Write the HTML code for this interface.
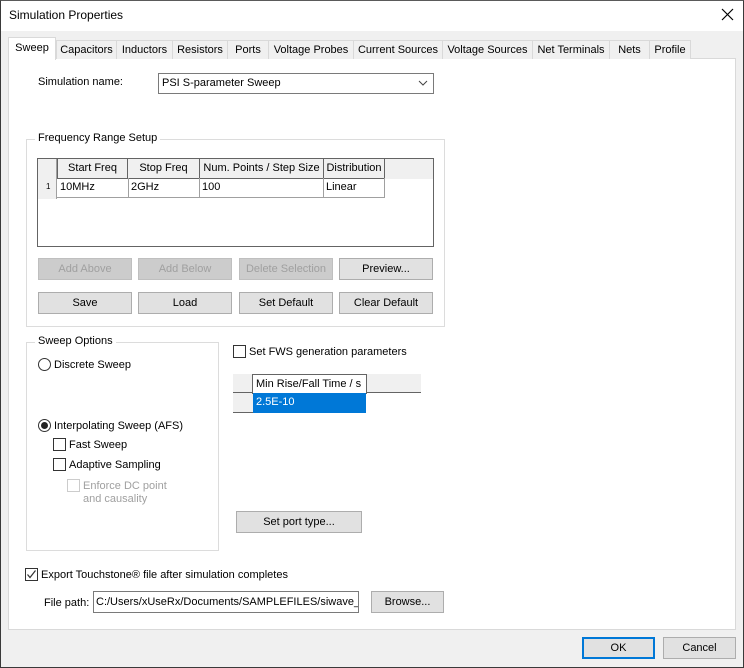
<!DOCTYPE html>
<html><head><style>
*{box-sizing:border-box;margin:0;padding:0}
body{width:744px;height:668px;overflow:hidden;font-family:"Liberation Sans",sans-serif;font-size:11px;color:#000;background:#f0f0f0;position:relative}
.a{position:absolute}
.win{left:0;top:0;width:744px;height:668px;border:1px solid #3a3a3a;border-top-color:#5a5a5a}
.title{left:1px;top:1px;width:742px;height:30px;background:#fff}
.tab{position:absolute;top:40px;height:19px;background:#f0f0f0;border:1px solid #d9d9d9;border-bottom:none;text-align:center;line-height:18px;white-space:nowrap}
.panel{left:8px;top:58px;width:728px;height:572px;background:#fff;border:1px solid #d9d9d9}
.btn{position:absolute;height:22px;background:#e1e1e1;border:1px solid #adadad;text-align:center;line-height:20px}
.dis{background:#cccccc;border-color:#bfbfbf;color:#a0a0a0}
.grp{position:absolute;border:1px solid #dcdcdc}
.gl{position:absolute;background:#fff;padding:0 3px;top:-8px;left:8px}
.cb{position:absolute;width:13px;height:13px;border:1px solid #333;background:#fff}
.cell{position:absolute;height:20px;line-height:19px;padding-left:3px;white-space:nowrap;overflow:hidden}
</style></head><body>
<div class="a win"></div>
<div class="a title"></div>
<div class="a" style="left:9px;top:8px;font-size:12px">Simulation Properties</div>
<svg class="a" style="left:721px;top:8px" width="13" height="13"><path d="M1 1L12 12M12 1L1 12" stroke="#000" stroke-width="1.2"/></svg>

<div class="a panel"></div>
<div class="tab" style="left:56px;width:61px">Capacitors</div>
<div class="tab" style="left:116px;width:57px">Inductors</div>
<div class="tab" style="left:172px;width:56px">Resistors</div>
<div class="tab" style="left:227px;width:42px">Ports</div>
<div class="tab" style="left:268px;width:86px">Voltage Probes</div>
<div class="tab" style="left:353px;width:90px">Current Sources</div>
<div class="tab" style="left:442px;width:91px">Voltage Sources</div>
<div class="tab" style="left:532px;width:78px">Net Terminals</div>
<div class="tab" style="left:609px;width:41px">Nets</div>
<div class="tab" style="left:649px;width:42px">Profile</div>
<div class="tab" style="left:8px;top:37px;width:48px;height:23px;background:#fff;line-height:21px">Sweep</div>

<div class="a" style="left:38px;top:76px">Simulation name:</div>
<div class="a" style="left:158px;top:73px;width:276px;height:21px;border:1px solid #7a7a7a;background:#fff;line-height:19px;padding-left:3px">PSI S-parameter Sweep</div>
<svg class="a" style="left:418px;top:80px" width="10" height="6"><path d="M1 1L5 5L9 1" stroke="#444" fill="none"/></svg>

<div class="grp" style="left:26px;top:139px;width:419px;height:188px"><div class="gl">Frequency Range Setup</div></div>
<div class="a" style="left:37px;top:158px;width:397px;height:89px;border:1px solid #646464;background:#fff"></div>
<div class="a" style="left:38px;top:159px;width:395px;height:20px;background:#f0f0f0"></div>
<div class="a" style="left:38px;top:159px;width:19px;height:40px;background:#f0f0f0;border-right:1px solid #a0a0a0"></div>
<div class="cell" style="left:57px;top:159px;width:71px;border:1px solid #646464;border-top:none;text-align:center;padding:0">Start Freq</div>
<div class="cell" style="left:128px;top:159px;width:72px;border:1px solid #646464;border-top:none;border-left:none;text-align:center;padding:0">Stop Freq</div>
<div class="cell" style="left:199px;top:159px;width:125px;border:1px solid #646464;border-top:none;text-align:center;padding:0">Num. Points / Step Size</div>
<div class="cell" style="left:323px;top:159px;width:62px;border:1px solid #646464;border-top:none;text-align:center;padding:0">Distribution</div>
<div class="cell" style="left:57px;top:178px;width:72px;border-right:1px solid #a0a0a0;border-bottom:1px solid #a0a0a0">10MHz</div>
<div class="cell" style="left:128px;top:178px;width:72px;border-right:1px solid #a0a0a0;border-bottom:1px solid #a0a0a0">2GHz</div>
<div class="cell" style="left:199px;top:178px;width:125px;border-right:1px solid #a0a0a0;border-bottom:1px solid #a0a0a0">100</div>
<div class="cell" style="left:323px;top:178px;width:62px;border-right:1px solid #a0a0a0;border-bottom:1px solid #a0a0a0">Linear</div>
<div class="a" style="left:46px;top:182px;font-size:8px">1</div>

<div class="btn dis" style="left:38px;top:258px;width:94px">Add Above</div>
<div class="btn dis" style="left:138px;top:258px;width:94px">Add Below</div>
<div class="btn dis" style="left:239px;top:258px;width:94px">Delete Selection</div>
<div class="btn" style="left:339px;top:258px;width:94px">Preview...</div>
<div class="btn" style="left:38px;top:292px;width:94px">Save</div>
<div class="btn" style="left:138px;top:292px;width:94px">Load</div>
<div class="btn" style="left:239px;top:292px;width:94px">Set Default</div>
<div class="btn" style="left:339px;top:292px;width:94px">Clear Default</div>

<div class="grp" style="left:26px;top:342px;width:193px;height:209px"><div class="gl">Sweep Options</div></div>
<div class="a" style="left:38px;top:358px;width:13px;height:13px;border:1px solid #333;border-radius:50%;background:#fff"></div>
<div class="a" style="left:54px;top:359px">Discrete Sweep</div>
<div class="a" style="left:38px;top:419px;width:13px;height:13px;border:1px solid #333;border-radius:50%;background:#fff"></div>
<div class="a" style="left:41px;top:422px;width:7px;height:7px;border-radius:50%;background:#222"></div>
<div class="a" style="left:54px;top:420px">Interpolating Sweep (AFS)</div>
<div class="cb" style="left:53px;top:438px"></div>
<div class="a" style="left:69px;top:439px">Fast Sweep</div>
<div class="cb" style="left:53px;top:458px"></div>
<div class="a" style="left:69px;top:459px">Adaptive Sampling</div>
<div class="cb" style="left:67px;top:479px;border-color:#ccc"></div>
<div class="a" style="left:83px;top:480px;color:#a0a0a0;line-height:13px">Enforce DC point<br>and causality</div>

<div class="cb" style="left:233px;top:345px"></div>
<div class="a" style="left:249px;top:346px">Set FWS generation parameters</div>
<div class="a" style="left:233px;top:374px;width:188px;height:19px;background:#f0f0f0;border-bottom:1px solid #646464"></div>
<div class="a" style="left:233px;top:393px;width:20px;height:20px;background:#f0f0f0;border-bottom:1px solid #646464"></div>
<div class="cell" style="left:252px;top:374px;width:115px;border:1px solid #646464;background:#fff">Min Rise/Fall Time / s</div>
<div class="cell" style="left:253px;top:393px;width:113px;background:#0078d7;color:#fff">2.5E-10</div>

<div class="btn" style="left:236px;top:511px;width:126px">Set port type...</div>

<div class="cb" style="left:25px;top:568px"></div>
<svg class="a" style="left:26px;top:569px" width="11" height="11"><path d="M1.5 5.5L4 8.5L9.5 1.5" stroke="#333" fill="none" stroke-width="1.2"/></svg>
<div class="a" style="left:41px;top:569px">Export Touchstone® file after simulation completes</div>
<div class="a" style="left:44px;top:597px">File path:</div>
<div class="a" style="left:93px;top:591px;width:266px;height:22px;border:1px solid #7a7a7a;background:#fff;line-height:20px;padding-left:2px;overflow:hidden;white-space:nowrap">C:/Users/xUseRx/Documents/SAMPLEFILES/siwave_</div>
<div class="btn" style="left:371px;top:591px;width:73px">Browse...</div>

<div class="btn" style="left:582px;top:637px;width:73px;border:2px solid #0078d7;line-height:18px">OK</div>
<div class="btn" style="left:663px;top:637px;width:73px">Cancel</div>
</body></html>
